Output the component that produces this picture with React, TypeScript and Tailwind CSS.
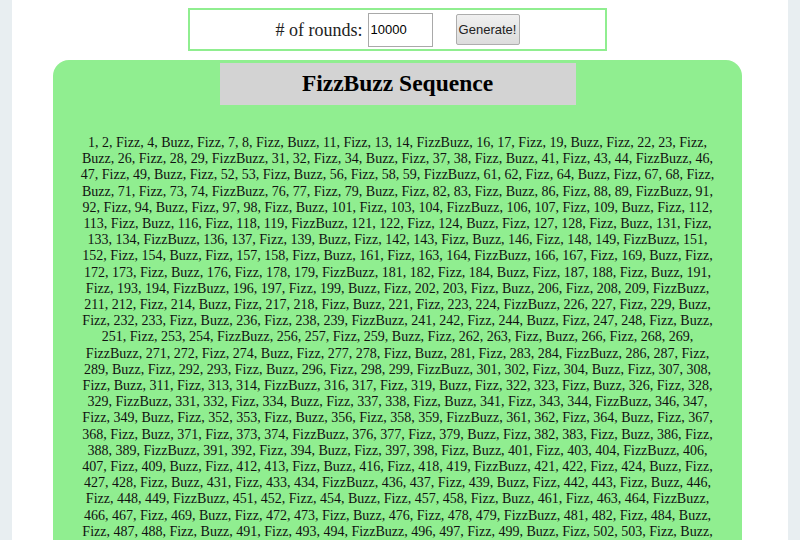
import { useState } from "react";

function fizzBuzz(n: number): string {
   const out: string[] = [];
   for (let i = 1; i <= n; i++) {
      if (i % 15 === 0) out.push("FizzBuzz");
      else if (i % 3 === 0) out.push("Fizz");
      else if (i % 5 === 0) out.push("Buzz");
      else out.push(String(i));
   }
   return out.join(", ");
}

export default function App() {
   const [rounds, setRounds] = useState<string>("10000");
   const [sequence, setSequence] = useState<string>(() => fizzBuzz(1200));

   function onGenerate(e: React.FormEvent) {
      e.preventDefault();
      setSequence(fizzBuzz(Math.min(Number(rounds) || 0, 1200)));
   }

   return (
      <div className="h-[540px] overflow-hidden bg-[#e8eef1] px-[12px]">
         <div className="h-full bg-white pt-[8px] font-['Liberation_Serif','Times_New_Roman',serif] text-black">
            {/* form */}
            <form
               onSubmit={onGenerate}
               className="ml-[176px] flex h-[43px] w-[419px] items-center justify-center border-2 border-[#90ee90]"
            >
               <label className="text-[18px] leading-none text-[#222]">
                  # of rounds:
               </label>
               <input
                  value={rounds}
                  onChange={(e) => setRounds(e.target.value)}
                  className="ml-[5px] h-[34px] w-[65px] border border-[#a9a9a9] px-[2px] font-['Liberation_Sans',Arial,sans-serif] text-[13px] outline-none"
               />
               <button
                  type="submit"
                  className="ml-[23px] h-[31px] w-[64px] rounded-[2px] border border-[#adadad] bg-gradient-to-b from-[#f0f0f0] to-[#dcdcdc] font-['Liberation_Sans',Arial,sans-serif] text-[13px] text-[#222]"
               >
                  Generate!
               </button>
            </form>

            {/* panel */}
            <div className="ml-[41px] mt-[9px] w-[689px] rounded-t-[16px] bg-[#90ee90] pt-[3px] pb-6">
               <div className="mx-auto flex h-[42px] w-[356px] items-center justify-center bg-[#d3d3d3]">
                  <h2 className="text-[23.5px] font-bold leading-none">
                     FizzBuzz Sequence
                  </h2>
               </div>
               <p className="mt-[30px] px-[25px] text-center text-[14px] leading-[16.2px] text-[#111]">
                  {sequence}
               </p>
            </div>
         </div>
      </div>
   );
}
